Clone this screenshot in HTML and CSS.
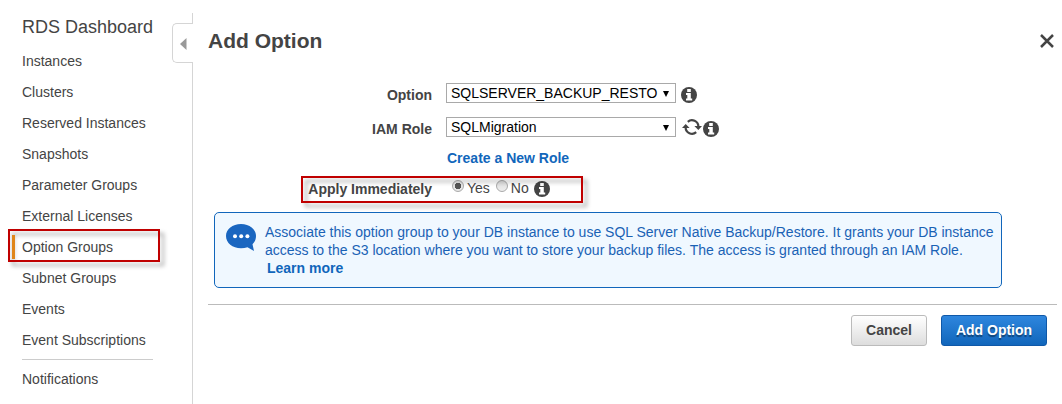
FILE: index.html
```html
<!DOCTYPE html>
<html lang="en">
<head>
<meta charset="utf-8">
<title>RDS - Add Option</title>
<link rel="stylesheet" href="styles.css">
</head>
<body>
<svg width="0" height="0" class="defs">
  <symbol id="info" viewBox="0 0 16 16">
    <circle cx="8" cy="8" r="8" fill="#444"/>
    <path d="M6.200 2h3.600v3h-3.600zM5 6h4.800v5.500h1.400v2H5v-2h1.300V8H5z" fill="#fff"/>
  </symbol>
</svg>
<div class="page">
  <nav class="sidebar">
    <div class="nav-title">RDS Dashboard</div>
    <ul class="nav-list">
      <li>Instances</li>
      <li>Clusters</li>
      <li>Reserved Instances</li>
      <li>Snapshots</li>
      <li>Parameter Groups</li>
      <li>External Licenses</li>
      <li class="active">Option Groups<span class="mark mark-nav"></span></li>
      <li>Subnet Groups</li>
      <li>Events</li>
      <li>Event Subscriptions</li>
    </ul>
    <div class="nav-rule"></div>
    <ul class="nav-list nav-last"><li>Notifications</li></ul>
    <div class="toggle"><svg width="7" height="12" viewBox="0 0 7 12"><path d="M0 6L6.500 0V12z" fill="#999"/></svg></div>
  </nav>
  <main class="main">
    <header class="head">
      <h1>Add Option</h1>
      <svg class="close" width="14" height="14" viewBox="0 0 14 14"><path d="M1 1L13 13M13 1L1 13" stroke="#444" stroke-width="2.500"/></svg>
    </header>
    <div class="row row-option">
      <label>Option</label>
      <div class="select"><span>SQLSERVER_BACKUP_RESTO</span><i class="caret"></i></div>
      <svg class="info"><use href="#info"/></svg>
    </div>
    <div class="row row-role">
      <label>IAM Role</label>
      <div class="select"><span>SQLMigration</span><i class="caret"></i></div>
      <svg class="refresh" width="20" height="16" viewBox="0 0 20 16">
        <path d="M5.800 2.800A6.400 6.400 0 0 1 16.400 7.500M14.200 13.200A6.400 6.400 0 0 1 3.600 8.500" fill="none" stroke="#444" stroke-width="2.200"/>
        <path d="M12.400 7H20L16.300 11zM0 9H7.600L3.700 5z" fill="#444"/>
      </svg>
      <svg class="info"><use href="#info"/></svg>
    </div>
    <div class="row row-link"><a>Create a New Role</a></div>
    <div class="row row-apply">
      <label>Apply Immediately</label>
      <i class="radio on"></i><span class="choice">Yes</span>
      <i class="radio"></i><span class="choice">No</span>
      <svg class="info"><use href="#info"/></svg>
      <span class="mark mark-apply"></span>
    </div>
    <section class="notice">
      <svg width="30" height="28" viewBox="0 0 30 28"><path d="M15 0C23.500 0 30 5 30 12C30 15.500 28.700 18.200 26.500 20.200L28 27L21.500 23.200C19.500 23.900 17.300 24.200 15 24.200C6.500 24.200 0 19 0 12S6.500 0 15 0z" fill="#1a66c0"/><g fill="#fff"><circle cx="9" cy="12.300" r="2"/><circle cx="15.200" cy="12.300" r="2"/><circle cx="21.400" cy="12.300" r="2"/></g></svg>
      <div class="notice-text">
        <div>Associate this option group to your DB instance to use SQL Server Native Backup/Restore. It grants your DB instance</div>
        <div>access to the S3 location where you want to store your backup files. The access is granted through an IAM Role.</div>
        <a>Learn more</a>
      </div>
    </section>
    <footer class="foot">
      <button class="btn">Cancel</button>
      <button class="btn primary">Add Option</button>
    </footer>
  </main>
</div>
</body>
</html>
```
FILE: styles.css
```css
* { box-sizing: border-box; }
body { margin: 0; background: #fff; color: #444; font: 14px/18px "Liberation Sans", Arial, sans-serif; }
svg { flex: none; }
.defs { position: absolute; }
.page { display: flex; width: 1062px; height: 404px; overflow: hidden; padding-top: 13px; }

.sidebar { position: relative; width: 193px; border-right: 1px solid #d5d5d5; padding-left: 22px; }
.nav-title { font-size: 18px; line-height: 28px; margin-bottom: 5px; white-space: nowrap; }
.nav-list { list-style: none; margin: 0; padding: 0; }
.nav-list li { position: relative; height: 31px; line-height: 31px; white-space: nowrap; }
.active::before { content: ""; position: absolute; z-index: 3; left: -10px; top: 3px; width: 3px; height: 24px; background: #e0861a; }
.nav-rule { width: 131px; height: 1px; margin-top: 3px; background: #ccc; }
.nav-last { margin-top: 4px; }
.toggle { position: absolute; right: -1px; top: 10px; width: 21px; height: 40px; background: #fff; border: 1px solid #d5d5d5; border-right: 0; border-radius: 5px 0 0 5px; padding: 14px 0 0 7px; line-height: 0; }

.mark { position: absolute; border: 2px solid #c00000; filter: drop-shadow(4px 4px 2px rgba(0,0,0,.35)); z-index: 2; }
.mark-nav { left: -14px; top: -3px; width: 152px; height: 33px; }
.mark-apply { left: 93px; top: -4px; width: 282px; height: 27px; }

.main { flex: 1; padding: 0 5px 0 15px; }
.head { display: flex; justify-content: space-between; align-items: center; height: 56px; padding-right: 3px; }
h1 { margin: 0; font-size: 21px; line-height: 56px; }
.row { position: relative; display: flex; align-items: flex-start; height: 34px; }
.row label { width: 224px; text-align: right; font-weight: bold; line-height: 18px; white-space: nowrap; }
.row-option { margin-top: 14px; }
.row-option label, .row-role label { margin-top: 3px; }
.select { display: flex; align-items: center; justify-content: space-between; width: 230px; height: 20px; margin-left: 14px; padding: 0 6px 0 4px; border: 1px solid #a9a9a9; color: #000; white-space: nowrap; }
.caret { border: 3px solid transparent; border-top: 6px solid #000; border-bottom: 0; margin-top: 1px; }
.info { width: 16px; height: 16px; margin: 4px 0 0 5px; }
.refresh { margin: 2px 0 0 6px; }
.row-role .info { margin-left: 1px; }
.row-link { height: 29px; padding: 0 0 0 239px; font-weight: bold; }
.row-link a { color: #1166bb; line-height: 14px; }
.row-apply { height: 32px; }
.radio { width: 12px; height: 12px; margin: 0 3px 0 20px; border: 1px solid #aaa; border-radius: 50%; background: linear-gradient(#ddd, #eee); }
.on { background: radial-gradient(circle, #555 0 3px, #e6e6e6 3.500px); }
.choice { margin-top: -1px; }
.choice + .radio { margin-left: 6px; }
.row-apply .info { margin: 1px 0 0 5px; }

.notice { display: flex; width: 788px; height: 76px; margin-left: 6px; padding: 11px; border: 1px solid #1166bb; border-radius: 5px; background: #f0f8ff; color: #1a62b5; }
.notice-text { margin: -1px 0 0 9px; white-space: nowrap; }
.notice a { margin-left: 2px; color: #1166bb; font-weight: bold; }
.foot { display: flex; justify-content: flex-end; gap: 14px; margin-top: 16px; padding: 10px 10px 0 0; border-top: 1px solid #bbb; }
.btn { width: 76px; height: 31px; padding: 0 0 2px; border: 1px solid #bbb; border-radius: 3px; background: linear-gradient(#fff, #ddd); color: #444; font: bold 14px "Liberation Sans", Arial, sans-serif; }
.primary { width: 106px; border-color: #0f58a8; background: linear-gradient(#2e86de, #1166bb); color: #fff; text-shadow: 0 2px 1px rgba(0,0,0,.4); }
```
